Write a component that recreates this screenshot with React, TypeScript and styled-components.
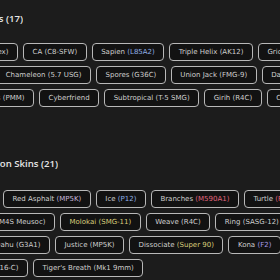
import React from "react";
import styled, { createGlobalStyle } from "styled-components";

const Global = createGlobalStyle`
  html, body { margin: 0; padding: 0; background: #1c1c1c; overflow: hidden; }
  body { font-family: "Open Sans", "Lato", sans-serif; }
`;

const Page = styled.div`
  width: 280px;
  height: 280px;
  overflow: hidden;
  padding-top: 12px;
  box-sizing: border-box;
`;

const Section = styled.section<{ $gap: number; $after: number }>`
  display: flex;
  flex-direction: column;
  gap: ${(p) => p.$gap}px;
  margin-bottom: ${(p) => p.$after}px;
`;

const HeadingClip = styled.div<{ $w: number }>`
  width: ${(p) => p.$w}px;
  overflow: hidden;
  display: flex;
  justify-content: flex-end;
`;

const Heading = styled.h2`
  margin: 0;
  flex-shrink: 0;
  white-space: nowrap;
  font-size: 9.6px;
  line-height: 14px;
  font-weight: 600;
  color: #e6e6e6;
`;

const Rows = styled.div`
  display: flex;
  flex-direction: column;
  gap: 5px;
`;

const Row = styled.div<{ $indent?: number }>`
  display: flex;
  gap: 5px;
  padding-left: ${(p) => p.$indent ?? 0}px;
  white-space: nowrap;
`;

const Cut = styled.div<{ $w: number }>`
  width: ${(p) => p.$w}px;
  flex-shrink: 0;
  overflow: hidden;
  display: flex;
  justify-content: flex-end;
`;

const Chip = styled.div`
  flex-shrink: 0;
  height: 18px;
  box-sizing: border-box;
  padding: 0 8.5px;
  display: flex;
  align-items: center;
  border: 1px solid #b8b8b8;
  border-radius: 4px;
  background: #121212;
  color: #cfcfcf;
  font-family: "DejaVu Sans", "Open Sans", sans-serif;
  font-size: 7px;
  font-weight: 400;
`;

const Name = styled.span<{ $tone?: string }>`
  color: ${(p) => p.$tone ?? "#cfcfcf"};
`;

const Weapon = styled.span<{ $tone?: string }>`
  color: ${(p) => p.$tone ?? "#cfcfcf"};
`;

type Skin = { name: string; weapon?: string; nameTone?: string; tone?: string };

const SkinChip = ({ s }: { s: Skin }) => (
  <Chip>
    <Name $tone={s.nameTone}>{s.name}</Name>
    {s.weapon && (
      <>
        &nbsp;<Weapon $tone={s.tone}>({s.weapon})</Weapon>
      </>
    )}
  </Chip>
);

type RowData = { cut?: { s: Skin; w: number }; indent?: number; items: Skin[] };

const SkinRow = ({ r }: { r: RowData }) => (
  <Row $indent={r.indent}>
    {r.cut && (
      <Cut $w={r.cut.w}>
        <SkinChip s={r.cut.s} />
      </Cut>
    )}
    {r.items.map((s, i) => (
      <SkinChip key={i} s={s} />
    ))}
  </Row>
);

const blue = "#8fb0e6";
const red = "#e0657e";
const yellow = "#d8cc7a";
const purple = "#a79be6";

const battle: RowData[] = [
  {
    cut: { s: { name: "Glitch", weapon: "Vortex" }, w: 18 },
    items: [
      { name: "CA", weapon: "C8-SFW" },
      { name: "Sapien", weapon: "L85A2", tone: blue },
      { name: "Triple Helix", weapon: "AK12" },
      { name: "Gridlock", weapon: "SPAS-12" },
    ],
  },
  {
    cut: { s: { name: "Chameleon", weapon: "5.7 USG" }, w: 91 },
    items: [
      { name: "Spores", weapon: "G36C" },
      { name: "Union Jack", weapon: "FMG-9" },
      { name: "Daybreak", weapon: "F2" },
    ],
  },
  {
    cut: { s: { name: "Neon Lines", weapon: "PMM" }, w: 34 },
    items: [
      { name: "Cyberfriend" },
      { name: "Subtropical", weapon: "T-5 SMG" },
      { name: "Girih", weapon: "R4C" },
      { name: "Coral", weapon: "MP7" },
    ],
  },
];

const season: RowData[] = [
  {
    indent: 3,
    items: [
      { name: "Red Asphalt", weapon: "MP5K", tone: "#c7b8dc" },
      { name: "Ice", weapon: "P12", tone: blue },
      { name: "Branches", weapon: "M590A1", tone: red },
      { name: "Turtle", weapon: "P12", tone: red },
    ],
  },
  {
    cut: { s: { name: "Urban", weapon: "M4S Meusoc" }, w: 55 },
    items: [
      { name: "Molokai", weapon: "SMG-11", nameTone: yellow, tone: yellow },
      { name: "Weave", weapon: "R4C" },
      { name: "Ring", weapon: "SASG-12" },
    ],
  },
  {
    cut: { s: { name: "Dahu", weapon: "G3A1" }, w: 50 },
    items: [
      { name: "Justice", weapon: "MP5K" },
      { name: "Dissociate", weapon: "Super 90", tone: yellow },
      { name: "Kona", weapon: "F2", tone: purple },
    ],
  },
  {
    cut: { s: { name: "Carbon", weapon: "416-C" }, w: 28 },
    items: [{ name: "Tiger's Breath", weapon: "Mk1 9mm" }],
  },
];

export default function App() {
  return (
    <>
      <Global />
      <Page>
        <Section $gap={17} $after={50}>
          <HeadingClip $w={23}>
            <Heading>Battle Pass Skins (17)</Heading>
          </HeadingClip>
          <Rows>
            {battle.map((r, i) => (
              <SkinRow key={i} r={r} />
            ))}
          </Rows>
        </Section>
        <Section $gap={19} $after={0}>
          <HeadingClip $w={58}>
            <Heading>Season Skins (21)</Heading>
          </HeadingClip>
          <Rows>
            {season.map((r, i) => (
              <SkinRow key={i} r={r} />
            ))}
          </Rows>
        </Section>
      </Page>
    </>
  );
}
